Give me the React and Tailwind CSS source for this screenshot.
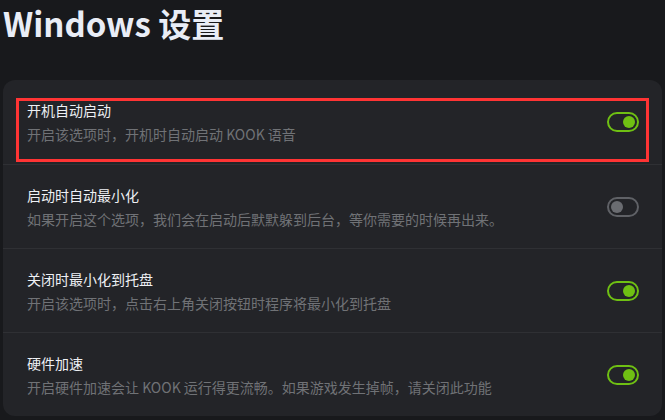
import React from "react";

const rows = [
  { title: "开机自动启动", desc: "开启该选项时，开机时自动启动 KOOK 语音", on: true, highlight: true },
  { title: "启动时自动最小化", desc: "如果开启这个选项，我们会在启动后默默躲到后台，等你需要的时候再出来。", on: false },
  { title: "关闭时最小化到托盘", desc: "开启该选项时，点击右上角关闭按钮时程序将最小化到托盘", on: true },
  { title: "硬件加速", desc: "开启硬件加速会让 KOOK 运行得更流畅。如果游戏发生掉帧，请关闭此功能", on: true },
];

function Toggle({ on }) {
  return on ? (
    <div className="flex h-[20px] w-[32px] items-center justify-end rounded-full border-2 border-[#6fc013] pr-[2px]">
      <div className="h-[12px] w-[12px] rounded-full bg-[#6fc013]" />
    </div>
  ) : (
    <div className="flex h-[20px] w-[32px] items-center justify-start rounded-full border-2 border-[#5f6166] pl-[2px]">
      <div className="h-[12px] w-[12px] rounded-full bg-[#6a6c71]" />
    </div>
  );
}

export default function App() {
  return (
    <div
      className="h-[420px] w-[665px] overflow-hidden bg-[#18191c] pl-[3px] pr-[3px]"
      style={{ fontFamily: '"Noto Sans CJK SC", "Noto Sans", sans-serif' }}
    >
      <h1 className="text-[33px] font-bold leading-[46px] text-[#e9edf6]">Windows 设置</h1>
      <div className="mt-[34px] overflow-hidden rounded-[12px] bg-[#232428]">
        {rows.map((r, i) => (
          <div
            key={i}
            className={`relative flex h-[84px] items-center justify-between pl-[24px] pr-[23px] ${i > 0 ? "border-t border-[#2f3034]" : ""}`}
          >
            {r.highlight && (
              <div className="absolute left-[13px] right-[13px] top-[18px] bottom-[2px] border-[3px] border-[#ff3434]" />
            )}
            <div className="flex flex-col gap-[4px]">
              <div className="text-[14px] leading-[20px] text-[#eef0f4]">{r.title}</div>
              <div className="text-[14px] leading-[20px] text-[#707276]">{r.desc}</div>
            </div>
            <Toggle on={r.on} />
          </div>
        ))}
      </div>
    </div>
  );
}
